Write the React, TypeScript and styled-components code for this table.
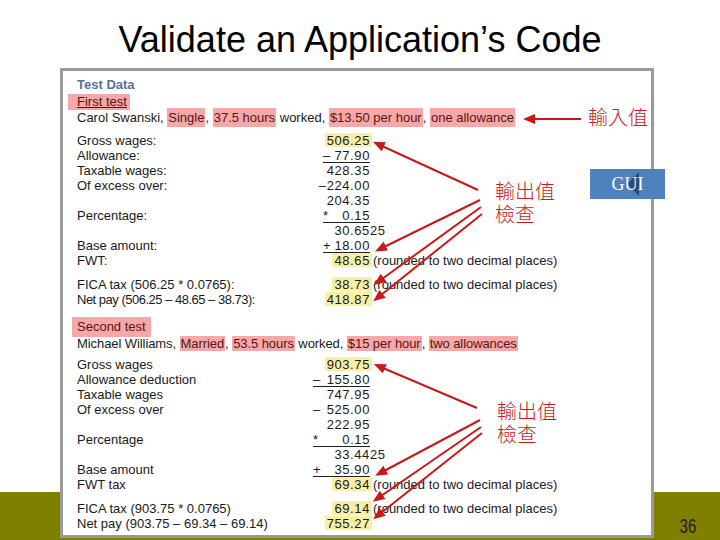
import React from "react";
import styled, { createGlobalStyle } from "styled-components";

const GlobalStyle = createGlobalStyle`
  html, body { margin: 0; padding: 0; background: #ffffff; }
  body { font-family: "Liberation Sans", Arial, sans-serif; }
`;

const Slide = styled.div`
  position: relative;
  width: 720px;
  height: 540px;
  overflow: hidden;
  background: #ffffff;
  display: flex;
  flex-direction: column;
`;

const Title = styled.h1`
  margin: 0;
  padding-top: 20px;
  font-family: "Liberation Sans", Arial, sans-serif;
  font-weight: normal;
  font-size: 36px;
  line-height: 40px;
  text-align: center;
  color: #000;
`;

const Body = styled.div`
  display: flex;
  margin-top: 8px;
  padding-left: 60px;
  position: relative;
  z-index: 1;
`;

const Frame = styled.div`
  box-sizing: border-box;
  width: 594px;
  height: 470px;
  border: 3px solid #9a9a9a;
  background: #ffffff;
  padding: 6px 0 0 14px;
  display: flex;
  flex-direction: column;
  color: #1a1a1a;
  font-size: 13px;
`;

const Heading = styled.div`
  font-weight: bold;
  font-size: 13px;
  line-height: 15px;
  color: #4f74a0;
`;

const TestTag = styled.div<{ $underline?: boolean; $h: number; $mt: number; $pl: number; $pr: number }>`
  align-self: flex-start;
  margin-top: ${(p) => p.$mt}px;
  margin-left: -${(p) => p.$pl}px;
  padding: 0 ${(p) => p.$pr}px 0 ${(p) => p.$pl}px;
  height: ${(p) => p.$h}px;
  line-height: ${(p) => p.$h}px;
  background: #f5a8a8;
  color: #5a1414;
  text-decoration: ${(p) => (p.$underline ? "underline" : "none")};
`;

const CaseLine = styled.div<{ $lh: number; $mt: number; $ls?: number }>`
  margin-top: ${(p) => p.$mt}px;
  line-height: ${(p) => p.$lh}px;
  letter-spacing: ${(p) => p.$ls ?? 0}px;
  white-space: nowrap;
`;

const Mark = styled.span<{ $pad: number }>`
  background: #f5a8a8;
  color: #5a1414;
  padding: ${(p) => p.$pad}px 1px;
`;

const RowList = styled.div<{ $mt: number }>`
  display: flex;
  flex-direction: column;
  margin-top: ${(p) => p.$mt}px;
`;

const Row = styled.div<{ $gap?: boolean }>`
  display: flex;
  align-items: stretch;
  height: 15px;
  line-height: 15px;
  margin-top: ${(p) => (p.$gap ? 9 : 0)}px;
  white-space: nowrap;
`;

const Label = styled.div<{ $w: number; $tight?: boolean }>`
  width: ${(p) => p.$w}px;
  flex: none;
  letter-spacing: ${(p) => (p.$tight ? -0.5 : 0)}px;
`;

const Value = styled.div<{ $w: number; $ul?: boolean; $split?: boolean }>`
  box-sizing: border-box;
  width: ${(p) => p.$w}px;
  flex: none;
  display: flex;
  justify-content: ${(p) => (p.$split ? "space-between" : "flex-end")};
  letter-spacing: 0.6px;
  border-bottom: 1px solid ${(p) => (p.$ul ? "#222" : "transparent")};
`;

const Num = styled.span<{ $hl?: boolean }>`
  background: ${(p) => (p.$hl ? "#f8eea6" : "transparent")};
  padding: 0 ${(p) => (p.$hl ? 2 : 0)}px;
  margin-right: ${(p) => (p.$hl ? -2 : 0)}px;
`;

const Overhang = styled.span`
  margin-right: -15.6px;
`;

const Note = styled.span`
  margin-left: 3px;
`;

const FooterBand = styled.div`
  position: absolute;
  left: 0;
  right: 0;
  bottom: 0;
  height: 48px;
  background: #808000;
  z-index: 0;
  display: flex;
  justify-content: flex-end;
  align-items: flex-end;
  padding: 0 24px 4px 0;
  box-sizing: border-box;
`;

const PageNumber = styled.span`
  font-family: "Liberation Sans", Arial, sans-serif;
  font-size: 21px;
  line-height: 21px;
  color: #1e1e10;
  transform: scaleX(0.72);
  transform-origin: right center;
`;

const Callout = styled.div<{ $top: number; $left: number }>`
  position: absolute;
  top: ${(p) => p.$top}px;
  left: ${(p) => p.$left}px;
  z-index: 3;
  font-family: "Noto Sans CJK TC", "Noto Sans CJK SC", sans-serif;
  font-weight: 300;
  font-size: 20px;
  line-height: 23px;
  color: #cc1a1a;
  white-space: pre;
`;

const GuiBox = styled.div`
  position: absolute;
  top: 169px;
  left: 590px;
  width: 75px;
  height: 30px;
  z-index: 3;
  background: #4f81bd;
  display: flex;
  align-items: center;
  justify-content: center;
`;

const GuiText = styled.span`
  position: relative;
  z-index: 0;
  font-family: "Liberation Serif", "Times New Roman", serif;
  font-size: 18px;
  line-height: 20px;
  color: #ffffff;
`;

const GuiGlyph = styled.svg`
  position: absolute;
  left: 15px;
  top: -2px;
  z-index: -1;
`;

const ArrowLayer = styled.svg`
  position: absolute;
  left: 0;
  top: 0;
  z-index: 2;
  pointer-events: none;
`;

type RowData = {
  label: string;
  op?: string;
  value: string;
  extra?: string;
  ul?: boolean;
  hl?: boolean;
  note?: boolean;
  gap?: boolean;
  tight?: boolean;
};

const NOTE = "(rounded to two decimal places)";

const rows1: RowData[] = [
  { label: "Gross wages:", value: "506.25", hl: true },
  { label: "Allowance:", op: "–", value: "77.90", ul: true },
  { label: "Taxable wages:", value: "428.35" },
  { label: "Of excess over:", value: "–224.00" },
  { label: "", value: "204.35" },
  { label: "Percentage:", op: "*", value: "0.15", ul: true },
  { label: "", value: "30.65", extra: "25" },
  { label: "Base amount:", op: "+", value: "18.00", ul: true },
  { label: "FWT:", value: "48.65", hl: true, note: true },
  { label: "FICA tax (506.25 * 0.0765):", value: "38.73", hl: true, note: true, gap: true },
  { label: "Net pay (506.25 – 48.65 – 38.73):", value: "418.87", hl: true, tight: true },
];

const rows2: RowData[] = [
  { label: "Gross wages", value: "903.75", hl: true },
  { label: "Allowance deduction", op: "–", value: "155.80", ul: true },
  { label: "Taxable wages", value: "747.95" },
  { label: "Of excess over", op: "–", value: "525.00" },
  { label: "", value: "222.95" },
  { label: "Percentage", op: "*", value: "0.15", ul: true },
  { label: "", value: "33.44", extra: "25" },
  { label: "Base amount", op: "+", value: "35.90", ul: true },
  { label: "FWT tax", value: "69.34", hl: true, note: true },
  { label: "FICA tax (903.75 * 0.0765)", value: "69.14", hl: true, note: true, gap: true },
  { label: "Net pay (903.75 – 69.34 – 69.14)", value: "755.27", hl: true },
];

function Rows({ rows, labelW, valueW, mt }: { rows: RowData[]; labelW: number; valueW: number; mt: number }) {
  return (
    <RowList $mt={mt}>
      {rows.map((r, i) => (
        <Row key={i} $gap={r.gap}>
          <Label $w={labelW} $tight={r.tight}>{r.label}</Label>
          <Value $w={valueW} $ul={r.ul} $split={!!r.op}>
            {r.op && <span>{r.op}</span>}
            <Num $hl={r.hl}>
              {r.value}
              {r.extra && <Overhang>{r.extra}</Overhang>}
            </Num>
          </Value>
          {r.note && <Note>{NOTE}</Note>}
        </Row>
      ))}
    </RowList>
  );
}

const arrows: [number, number, number, number][] = [
  [581, 119, 533, 119],
  [478, 190, 382, 146],
  [480, 200, 384, 247],
  [481, 207, 382, 279],
  [482, 214, 381, 295],
  [477, 408, 383, 368],
  [480, 420, 384, 471],
  [481, 427, 381, 496],
  [482, 433, 381, 513],
];

export default function App() {
  return (
    <>
      <GlobalStyle />
      <Slide>
        <Title>Validate an Application’s Code</Title>
        <Body>
          <Frame>
            <Heading>Test Data</Heading>
            <TestTag $underline $h={16} $mt={2} $pl={9} $pr={3}>
              First test
            </TestTag>
            <CaseLine $lh={18} $mt={-1}>
              Carol Swanski, <Mark $pad={2}>Single</Mark>, <Mark $pad={2}>37.5 hours</Mark> worked,{" "}
              <Mark $pad={2}>$13.50 per hour</Mark>, <Mark $pad={2}>one allowance</Mark>
            </CaseLine>
            <Rows rows={rows1} labelW={246} valueW={47} mt={6} />
            <TestTag $h={20} $mt={10} $pl={5} $pr={5}>
              Second test
            </TestTag>
            <CaseLine $lh={14} $mt={0} $ls={-0.08}>
              Michael Williams, <Mark $pad={0}>Married</Mark>, <Mark $pad={0}>53.5 hours</Mark> worked,{" "}
              <Mark $pad={0}>$15 per hour</Mark>, <Mark $pad={0}>two allowances</Mark>
            </CaseLine>
            <Rows rows={rows2} labelW={236} valueW={57} mt={6} />
          </Frame>
        </Body>
        <FooterBand>
          <PageNumber>36</PageNumber>
        </FooterBand>
        <Callout $top={105} $left={588}>輸入值</Callout>
        <Callout $top={179} $left={495}>{"輸出值\n檢查"}</Callout>
        <Callout $top={399} $left={497}>{"輸出值\n檢查"}</Callout>
        <GuiBox>
          <GuiText>
            GUI
            <GuiGlyph width="12" height="24" viewBox="0 0 12 24">
              <polygon points="0,12 12,0 12,24" fill="#2b4c78" />
            </GuiGlyph>
          </GuiText>
        </GuiBox>
        <ArrowLayer width="720" height="540" viewBox="0 0 720 540">
          <defs>
            <marker id="head" markerWidth="6" markerHeight="5" refX="1" refY="2.5" orient="auto" markerUnits="strokeWidth">
              <polygon points="0,0 6,2.5 0,5" fill="#c81818" />
            </marker>
          </defs>
          {arrows.map(([x1, y1, x2, y2], i) => (
            <line key={i} x1={x1} y1={y1} x2={x2} y2={y2} stroke="#c81818" strokeWidth={2} markerEnd="url(#head)" />
          ))}
        </ArrowLayer>
      </Slide>
    </>
  );
}
